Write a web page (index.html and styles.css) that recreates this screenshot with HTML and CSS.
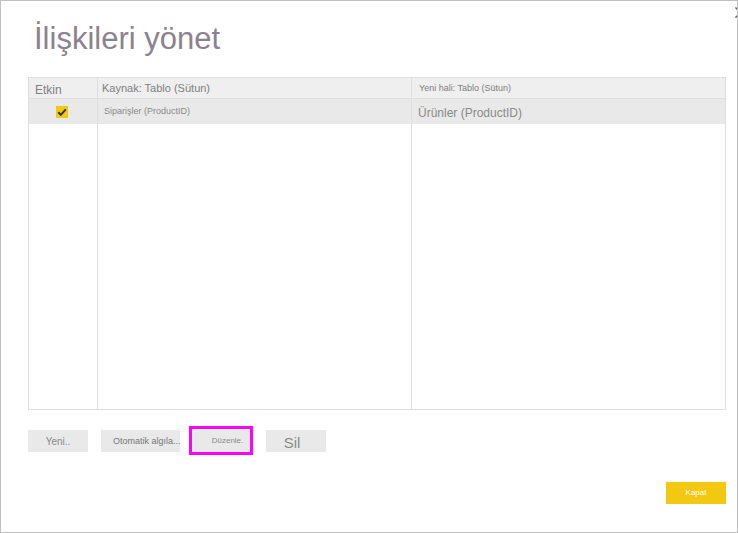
FILE: index.html
```html
<!DOCTYPE html>
<html lang="tr">
<head>
<meta charset="utf-8">
<title>İlişkileri yönet</title>
<link rel="stylesheet" href="styles.css">
</head>
<body>
<main class="dialog">
  <button class="close" type="button" aria-label="Kapat">
    <svg width="11" height="11" viewBox="0 0 11 11"><path d="M0.5 0.5L10.5 10.5M0.5 10.5L10.5 0.5"/></svg>
  </button>
  <h1 class="title">İlişkileri yönet</h1>
  <div class="table-area">
    <table class="relations">
      <colgroup><col class="col-active"><col class="col-source"><col></colgroup>
      <thead>
        <tr>
          <th class="size-l" id="active">Etkin</th>
          <th class="size-m">Kaynak: Tablo (Sütun)</th>
          <th class="size-s">Yeni hali: Tablo (Sütun)</th>
        </tr>
      </thead>
      <tbody>
        <tr class="selected">
          <td class="check-cell"><label class="check"><input type="checkbox" checked aria-labelledby="active"><svg width="12" height="12" viewBox="0 0 12 12"><path d="M2.3 6.2L4.8 8.8L9.8 3.3"/></svg></label></td>
          <td class="size-s source">Siparişler (ProductID)</td>
          <td class="size-l target">Ürünler (ProductID)</td>
        </tr>
        <tr class="empty"><td></td><td></td><td></td></tr>
      </tbody>
    </table>
  </div>
  <div class="actions">
    <button class="btn new" type="button">Yeni..</button>
    <button class="btn detect" type="button">Otomatik algıla...</button>
    <span class="highlight"><button class="btn edit" type="button">Düzenle.</button></span>
    <button class="btn delete" type="button">Sil</button>
  </div>
  <footer class="footer">
    <button class="btn primary" type="button">Kapat</button>
  </footer>
</main>
</body>
</html>
```
FILE: styles.css
```css
* {
  box-sizing: border-box;
}

body {
  margin: 0;
  font-family: "Liberation Sans", Arial, sans-serif;
  color: #8a8a8a;
}

.dialog {
  position: relative;
  display: flex;
  flex-direction: column;
  height: 100vh;
  min-height: 400px;
  padding: 16px 11px 28px 27px;
  border: 1px solid #c0c0c0;
  background: #fff;
  overflow: hidden;
}

.close {
  position: absolute;
  top: 6px;
  right: -9px;
  display: flex;
  padding: 0;
  border: 0;
  background: none;
}

.close path {
  fill: none;
  stroke: #555;
  stroke-width: 1.3;
}

.title {
  margin: 0 0 16px;
  padding-left: 6px;
  font-size: 31px;
  font-weight: 400;
  line-height: 44px;
  color: #8c828e;
}

.table-area {
  flex: 1;
  min-height: 0;
}

.relations {
  width: 100%;
  height: 100%;
  table-layout: fixed;
  border: 1px solid #dfdfdf;
  border-spacing: 0;
}

.col-active {
  width: 69px;
}

.col-source {
  width: 314px;
}

th,
td {
  padding: 0 6px;
  border-right: 1px solid #dfdfdf;
  text-align: left;
  font-weight: 400;
  white-space: nowrap;
}

th:last-child,
td:last-child {
  border-right: 0;
}

th {
  height: 21px;
  padding: 0 4px;
  border-bottom: 1px solid #dfdfdf;
  background: #efefef;
  color: #808080;
  line-height: 16px;
}

th:first-child {
  padding: 4px 6px 0;
}

th:last-child {
  padding-left: 7px;
}

.size-s {
  font-size: 9px;
}

.size-m {
  font-size: 11px;
}

.size-l {
  font-size: 12px;
}

.selected td {
  height: 25px;
  background: #e9e9e9;
  line-height: 18px;
}

.selected .source {
  padding-bottom: 2px;
}

.selected .target {
  padding-top: 2px;
}

.check-cell {
  text-align: center;
}

.check {
  position: relative;
  display: block;
  width: 12px;
  height: 12px;
  margin: 0 auto 0 21px;
}

.check input {
  display: block;
  width: 12px;
  height: 12px;
  margin: 0;
  appearance: none;
  background: #f2c811;
}

.check svg {
  position: absolute;
  inset: 0;
  pointer-events: none;
}

.check path {
  fill: none;
  stroke: #333;
  stroke-width: 2;
}

.actions {
  display: flex;
  align-items: center;
  margin-top: 16px;
}

.btn {
  width: 60px;
  height: 22px;
  padding: 0;
  border: 0;
  background: #e9e9e9;
  color: #8a8a8a;
  font-family: inherit;
  font-size: 9px;
  line-height: 20px;
  white-space: nowrap;
}

.new {
  padding-top: 2px;
  font-size: 10px;
}

.detect {
  width: 79px;
  margin-left: 13px;
  padding-left: 12px;
  color: #777;
  text-align: left;
}

.highlight {
  display: flex;
  margin-left: 9px;
  padding: 1px 0 0 1px;
  border: 3px solid #f0f;
}

.edit {
  width: 57px;
  padding-left: 12px;
  font-size: 8px;
}

.delete {
  margin-left: 13px;
  padding: 4px 8px 0 0;
  font-size: 15px;
  line-height: 18px;
}

.footer {
  display: flex;
  justify-content: flex-end;
  margin-top: 27px;
}

.primary {
  background: #f2c811;
  color: #fff;
  font-size: 8px;
}
```
